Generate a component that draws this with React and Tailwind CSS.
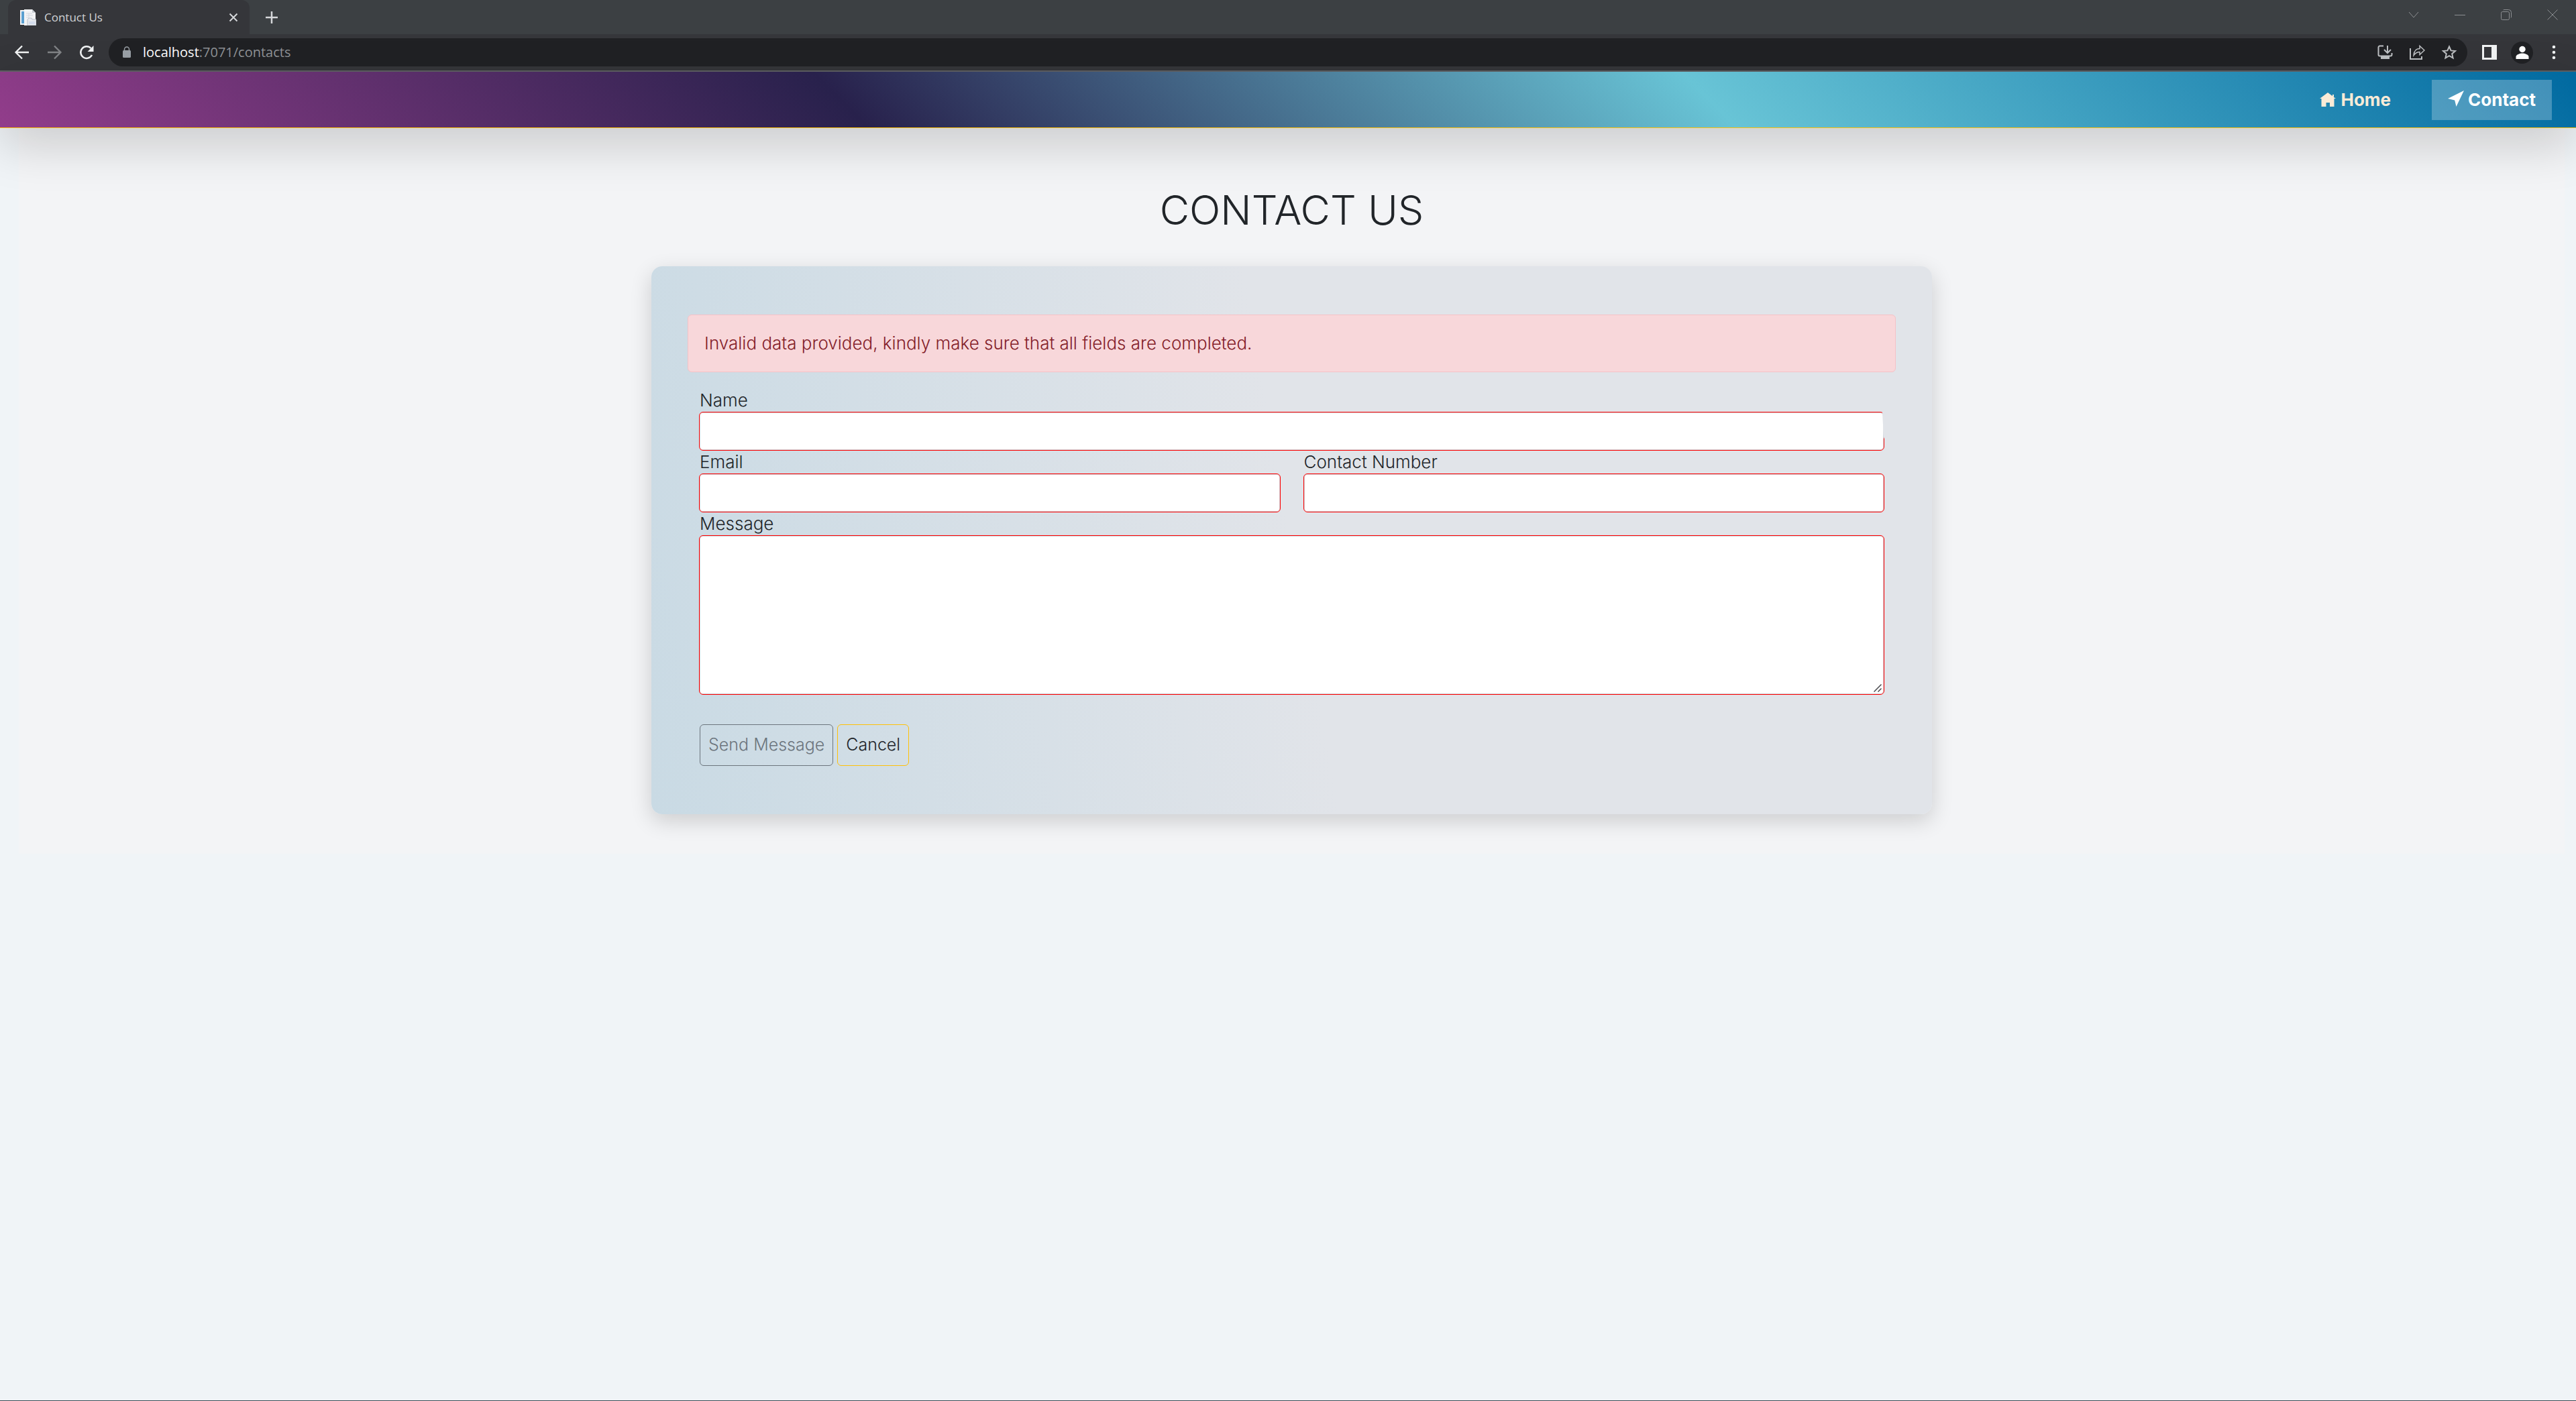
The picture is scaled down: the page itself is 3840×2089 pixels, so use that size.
function Field({ id, label, textarea, partial }) {
  const cls = 'block w-full rounded-md border border-[#ff0000] bg-white px-4 text-2xl text-[#212529] shadow-[inset_0_0_0_1px_#ced4da] outline-none';
  return (
    <div className="px-[17px]">
      <label htmlFor={id} className="block h-[34px] pl-px text-[26px] leading-[34px] font-light">{label}</label>
      {textarea ? (
        <div className="relative">
          <textarea id={id} className={cls + ' h-[238px] resize py-2 [&::-webkit-resizer]:hidden'} />
          <svg viewBox="0 0 12 12" className="pointer-events-none absolute right-1 bottom-1 size-3" fill="none" stroke="#4a4a4e" strokeWidth="1.5" aria-hidden="true">
            <path d="M.5 11.500l11-11M6.500 11.500l5-5" />
          </svg>
        </div>
      ) : (
        <input id={id} type="text" className={cls + ' h-[58px]' + (partial ? ' [clip-path:polygon(0_0,calc(100%-3px)_0,calc(100%-1px)_65%,100%_70%,100%_100%,0_100%)]' : '')} />
      )}
    </div>
  );
}

const Icon = ({ children, size = 'size-6', view = '0 0 24 24' }) => (
  <svg viewBox={view} className={size + ' shrink-0'} fill="none" stroke="currentColor" strokeWidth="2" aria-hidden="true">{children}</svg>
);

function BrowserChrome() {
  return (
    <div className="bg-[#35363a] font-['Open_Sans',sans-serif]">
      <div className="flex h-[51px] items-stretch bg-[#3c4043] pl-3">
        <div className="flex w-[360px] items-center rounded-t-xl bg-[#35363a] pr-4 pl-[18px] text-[#d0d2d5]">
          <svg viewBox="0 0 24 24" className="size-6 shrink-0" aria-hidden="true">
            <path d="M0 1h6v22H0z" fill="#f4f6f8" />
            <path d="M2 3h4v18H2z" fill="#5a9fd0" />
            <path d="M6 0h12l5 5v19H6z" fill="#f2f3f5" />
            <path d="M18 0l5 5h-5z" fill="#c5cad0" />
            <path d="M9 6h9M9 9h10M9 12h4M13 6v10" stroke="#d3d8df" fill="none" />
            <path d="M11 15l2-2h4l1 2h6v9H11z" fill="#e6e9ee" stroke="#b9bfc8" />
            <path d="M13 18h9v4h-9z" fill="#d3dcec" />
          </svg>
          <span className="ml-3 flex-1 text-[17px] leading-6">Contuct Us</span>
          <button type="button" aria-label="Close tab" className="text-[#d5d7da]">
            <Icon size="size-4" view="0 0 16 16"><path d="M2.500 2.500l11 11M13.500 2.500l-11 11" /></Icon>
          </button>
        </div>
        <button type="button" aria-label="New tab" className="ml-6 text-[#d5d7da]">
          <Icon size="size-[18px]" view="0 0 18 18"><path d="M9 0v18M0 9h18" strokeWidth="2.500" /></Icon>
        </button>
        <div className="ml-auto flex items-center gap-[53px] pr-[27px] pb-2 text-[#8c8f92]">
          <button type="button" aria-label="Search tabs"><Icon size="size-4" view="0 0 16 16"><path d="M1 4l7 8 7-8" strokeWidth="1" /></Icon></button>
          <button type="button" aria-label="Minimize"><Icon size="size-4" view="0 0 16 16"><path d="M0 8.500h16" strokeWidth="1" /></Icon></button>
          <button type="button" aria-label="Restore"><Icon size="size-4" view="0 0 16 16"><rect x=".5" y="3.500" width="12" height="12" rx="2" strokeWidth="1" /><path d="M3.500 1Q4 .5 5 .5h6.500a4 4 0 0 1 4 4V11q0 1-.5 1.500" strokeWidth="1" /></Icon></button>
          <button type="button" aria-label="Close window"><Icon size="size-4" view="0 0 16 16"><path d="M.5.5l15 15M15.500.5l-15 15" strokeWidth="1" /></Icon></button>
        </div>
      </div>
      <div className="flex h-[54px] items-center pr-[21px] pl-[21px] text-[#f1f3f4]">
        <button type="button" aria-label="Back"><Icon><path d="M22 12H3M12 2.500L2.500 12l9.500 9.500" strokeWidth="2.300" /></Icon></button>
        <button type="button" aria-label="Forward" className="ml-6 text-[#828487]"><Icon><path d="M2 12h19M12 2.500l9.500 9.500-9.500 9.500" strokeWidth="2.300" /></Icon></button>
        <button type="button" aria-label="Reload" className="ml-6">
          <Icon><path d="M20 16a8.800 8.800 0 1 1-1.500-10" strokeWidth="2.500" /><path d="M22.500 2v9h-9z" fill="currentColor" stroke="none" /></Icon>
        </button>
        <div className="ml-[21px] flex h-[42px] min-w-0 flex-1 items-center rounded-full bg-[#202124] pr-[15px] pl-[21px]">
          <svg viewBox="0 0 12 18" className="h-[18px] w-3 shrink-0 text-[#9aa0a6]" aria-hidden="true">
            <path d="M2.500 7V4.500a3.500 3.500 0 0 1 7 0V7" fill="none" stroke="currentColor" strokeWidth="1.500" />
            <rect y="6" width="12" height="11" rx="1.500" fill="currentColor" />
          </svg>
          <span className="ml-[18px] flex-1 text-[20px] leading-8 text-[#8f9296]"><span className="text-white">localhost</span>:7071/contacts</span>
          <div className="flex items-center gap-6 text-[#bdc0c3]">
            <button type="button" aria-label="Install"><Icon><path d="M10 2.500H4.500A2 2 0 0 0 2.500 4.500v11a2 2 0 0 0 2 2h16a2 2 0 0 0 2-2V13M16 2v10M11 8l5 5 5-5" /><path d="M6 18h13v4H6z" fill="currentColor" stroke="none" /></Icon></button>
            <button type="button" aria-label="Share"><Icon><path d="M2 6v16h17v-4" /><path d="M7 16.500C7.500 10 11 6.500 16 6.500V2.500l7 6.500-7 6.500v-4c-4 0-6.500 1.500-9 5z" strokeWidth="1.500" /></Icon></button>
            <button type="button" aria-label="Bookmark"><Icon><path d="M12 3.500l2.600 5.900 6.400.6-4.800 4.200 1.400 6.300-5.600-3.300-5.600 3.300 1.400-6.300L3 10l6.400-.6z" /></Icon></button>
          </div>
        </div>
        <button type="button" aria-label="Side panel" className="ml-[21px]"><Icon><path d="M1 1h22v22H1zM4 4v16h11V4z" fill="currentColor" fillRule="evenodd" stroke="none" /></Icon></button>
        <button type="button" aria-label="Profile" className="ml-5 flex size-[33px] items-center justify-center rounded-full bg-[#202124]">
          <Icon><circle cx="12" cy="7.500" r="4.700" fill="white" stroke="none" /><path d="M2.500 22v-3.500c0-3 6-5 9.500-5s9.500 2 9.500 5V22z" fill="white" stroke="none" /></Icon>
        </button>
        <button type="button" aria-label="Menu" className="ml-[19px]"><Icon><g fill="currentColor" stroke="none"><circle cx="12" cy="4" r="2.300" /><circle cx="12" cy="12" r="2.300" /><circle cx="12" cy="20" r="2.300" /></g></Icon></button>
      </div>
      <div className="h-0.5 bg-[#5f6063]" />
    </div>
  );
}

export default function App() {
  return (
    <div className="flex min-h-screen flex-col bg-[#f0f4f7] font-[Inter,sans-serif] text-[#212529]">
      <BrowserChrome />
      <nav className="relative flex h-[84px] items-center justify-end border-b border-[#ffc107] bg-[linear-gradient(45deg,#923d8b_0%,#28214c_33%,#68c4d6_66%,#0069a0_100%)] pr-9 text-[26px] font-bold shadow-[0_24px_72px_rgba(0,0,0,0.176)]">
        <a href="#home" className="mr-[61px] flex items-center gap-[7px] text-[#faebd7]">
          <svg viewBox="0 0 24 24" className="size-6" fill="currentColor" aria-hidden="true"><path d="M12 1l7 5.300V4h2v3.900l3 2.100h-2.500v12H15v-6H9.500v6h-7V10H0z" /></svg>
          Home
        </a>
        <a href="#contact" className="flex h-[60px] items-center gap-1.5 bg-white/25 px-6 text-white">
          <svg viewBox="0 0 24 24" className="mb-1 size-6" fill="currentColor" aria-hidden="true"><path d="M24 0L12.500 24l-2.300-9.500L0 12z" /></svg>
          Contact
        </a>
      </nav>
      <main className="mr-[17px] ml-7 bg-[#f3f4f6] pt-[84px] pb-[59px]">
        <h1 className="mb-[46px] text-center text-[61px] leading-[76px] font-light">CONTACT US</h1>
        <form className="mx-auto w-[50.3%] min-w-[1000px] rounded-2xl bg-[linear-gradient(80deg,#c9dae4_0%,#e1e4e9_50%)] px-[54px] pt-[72px] pb-[72px] shadow-[0_10px_32px_rgba(0,0,0,0.16)]">
          <div role="alert" className="mb-[25px] rounded-md border border-[#f5c2c7] bg-[#f8d7da] px-6 py-[26px] text-[26px] leading-8 font-light text-[#842029]">Invalid data provided, kindly make sure that all fields are completed.</div>
          <Field id="name" label="Name" partial />
          <div className="grid grid-cols-2">
            <Field id="email" label="Email" />
            <Field id="phone" label="Contact Number" />
          </div>
          <Field id="message" label="Message" textarea />
          <div className="mt-11 flex gap-1.5 px-[18px] text-[25px] font-light">
            <button type="button" disabled className="h-[62px] rounded-md border border-[#6c757d] px-3 text-[#6c757d]">Send Message</button>
            <button type="button" className="h-[62px] rounded-md border border-[#ffc107] px-3">Cancel</button>
          </div>
        </form>
      </main>
      <div className="mt-auto h-px bg-[#3c4a54]" />
    </div>
  );
}
